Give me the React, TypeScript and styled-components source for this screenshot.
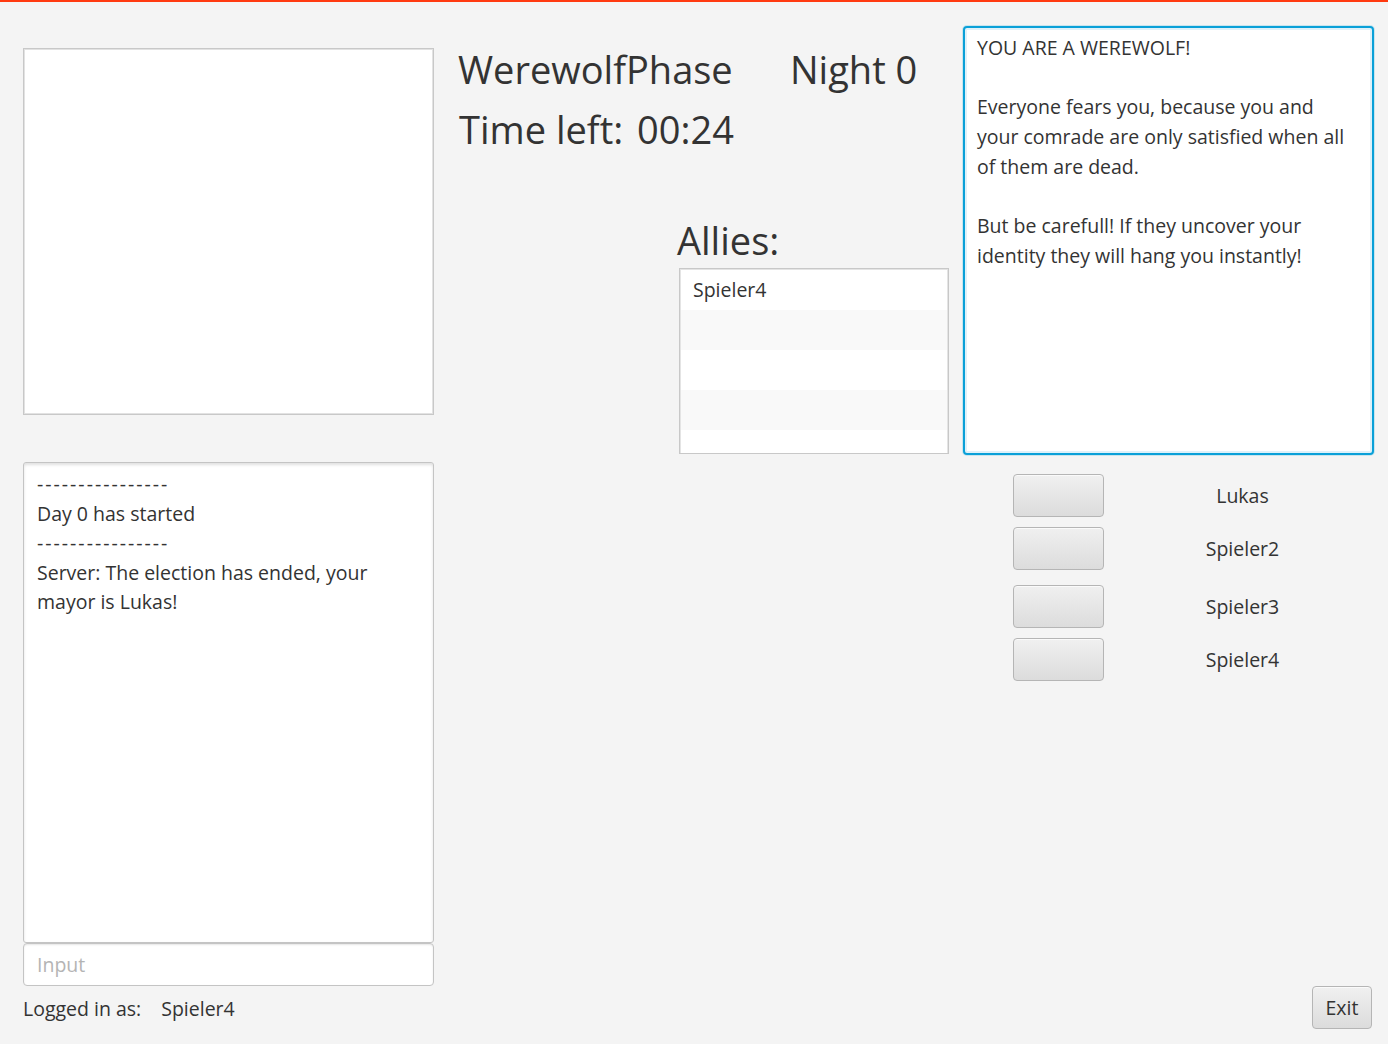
import React from "react";
import styled, { createGlobalStyle } from "styled-components";

const Global = createGlobalStyle`
  html, body { margin: 0; padding: 0; background: #f4f4f4; }
  body { font-family: "Open Sans", "Noto Sans", sans-serif; color: #333333; }
  * { box-sizing: border-box; }
`;

const Frame = styled.div`
  height: 1044px;
  border-top: 2px solid #ff3a10;
  display: flex;
  padding-left: 23px;
  background: #f4f4f4;
  overflow: hidden;
`;

const LeftColumn = styled.div`
  width: 411px;
  display: flex;
  flex-direction: column;
  padding-top: 46px;
`;

const MiddleColumn = styled.div`
  width: 490px;
  margin-left: 24px;
  display: flex;
  flex-direction: column;
`;

const RightColumn = styled.div`
  width: 411px;
  margin-left: 15px;
  display: flex;
  flex-direction: column;
  padding-top: 24px;
`;

const PlainList = styled.div`
  width: 411px;
  height: 367px;
  background: #ffffff;
  border: 1px solid #c8c8c8;
  box-shadow: inset 0 0 0 1px #e2e2e2;
`;

const ChatArea = styled.div`
  margin-top: 47px;
  height: 481px;
  background: #ffffff;
  border: 1px solid #c4c4c4;
  border-radius: 3px;
  box-shadow: inset 0 2px 3px rgba(0, 0, 0, 0.12);
  padding: 6px 13px;
  font-size: 19.5px;
  line-height: 29.5px;
`;

const ChatLine = styled.div<{ $rule?: boolean }>`
  white-space: pre-wrap;
  letter-spacing: ${(p) => (p.$rule ? "2px" : "normal")};
`;

const InputField = styled.input`
  height: 43px;
  width: 411px;
  border: 1px solid #c4c4c4;
  border-radius: 4px;
  background: #ffffff;
  box-shadow: inset 0 1px 2px rgba(0, 0, 0, 0.1);
  padding: 0 13px;
  font-family: "Open Sans", "Noto Sans", sans-serif;
  font-size: 19.5px;
  color: #333333;
  outline: none;
  &::placeholder { color: #b4b4b4; }
`;

const LoggedRow = styled.div`
  margin-top: 9px;
  display: flex;
  gap: 20px;
  font-size: 19.5px;
  line-height: 28px;
`;

const HeaderRow = styled.div`
  display: flex;
  align-items: baseline;
  font-size: 38px;
  line-height: 60px;
  margin-top: 37px;
`;

const HeaderText = styled.span<{ $width?: number }>`
  display: inline-block;
  width: ${(p) => (p.$width ? `${p.$width}px` : "auto")};
  white-space: nowrap;
`;

const TimeRow = styled(HeaderRow)`
  margin-top: 0;
  padding-left: 1px;
`;

const AlliesBlock = styled.div`
  margin-top: 54px;
  margin-left: 219px;
  display: flex;
  flex-direction: column;
`;

const AlliesTitle = styled.div`
  font-size: 38px;
  line-height: 54px;
`;

const AlliesList = styled.div`
  margin-left: 2px;
  margin-top: 1px;
  width: 270px;
  height: 186px;
  background: #ffffff;
  border: 1px solid #c8c8c8;
  box-shadow: inset 0 0 0 1px #e4e4e4;
  overflow: hidden;
  padding: 1px;
`;

const AllyRow = styled.div<{ $odd: boolean }>`
  height: 40px;
  background: ${(p) => (p.$odd ? "#f9f9f9" : "#ffffff")};
  padding-left: 12px;
  font-size: 19.5px;
  line-height: 40px;
`;

const RoleArea = styled.div`
  height: 429px;
  background: #ffffff;
  border: 2px solid #0aa0d8;
  border-radius: 4px;
  box-shadow: 0 0 0 1px rgba(3, 158, 211, 0.18), inset 0 0 0 2px #dff1f9;
  padding: 5px 12px;
  font-size: 19.5px;
  line-height: 29.7px;
`;

const RoleLine = styled.div`
  min-height: 29.7px;
`;

const VoteList = styled.div`
  margin-top: 19px;
  display: flex;
  flex-direction: column;
`;

const VoteRow = styled.div<{ $space: number }>`
  display: grid;
  grid-template-columns: 90px 1fr;
  align-items: center;
  margin-top: ${(p) => p.$space}px;
  padding-left: 50px;
`;

const VoteButton = styled.button`
  width: 91px;
  height: 43px;
  border: 1px solid #b5b5b5;
  border-radius: 4px;
  background: linear-gradient(#f0f0f0, #dcdcdc);
  box-shadow: inset 0 1px 0 #fafafa;
  cursor: pointer;
`;

const VoteName = styled.div`
  text-align: center;
  font-size: 19.5px;
  padding-left: 8px;
`;

const Spacer = styled.div`
  flex: 1;
`;

const ExitButton = styled.button`
  align-self: flex-end;
  margin-right: 2px;
  margin-bottom: 15px;
  width: 60px;
  height: 43px;
  border: 1px solid #b5b5b5;
  border-radius: 4px;
  background: linear-gradient(#f0f0f0, #dcdcdc);
  box-shadow: inset 0 1px 0 #fafafa;
  font-family: "Open Sans", "Noto Sans", sans-serif;
  font-size: 19.5px;
  color: #333333;
  padding: 0;
`;

const chat = [
  "----------------",
  "Day 0 has started",
  "----------------",
  "Server: The election has ended, your mayor is Lukas!",
];

const role = [
  "YOU ARE A WEREWOLF!",
  "",
  "Everyone fears you, because you and your comrade are only satisfied when all of them are dead.",
  "",
  "But be carefull! If they uncover your identity they will hang you instantly!",
];

const votes = [
  { name: "Lukas", space: 0 },
  { name: "Spieler2", space: 10 },
  { name: "Spieler3", space: 15 },
  { name: "Spieler4", space: 10 },
];

export default function App() {
  return (
    <>
      <Global />
      <Frame>
        <LeftColumn>
          <PlainList />
          <ChatArea>
            {chat.map((l, i) => (
              <ChatLine key={i} $rule={/^-+$/.test(l)}>
                {l}
              </ChatLine>
            ))}
          </ChatArea>
          <InputField placeholder="Input" />
          <LoggedRow>
            <span>Logged in as:</span>
            <span>Spieler4</span>
          </LoggedRow>
        </LeftColumn>
        <MiddleColumn>
          <HeaderRow>
            <HeaderText $width={332}>WerewolfPhase</HeaderText>
            <HeaderText>Night 0</HeaderText>
          </HeaderRow>
          <TimeRow>
            <HeaderText $width={178}>Time left:</HeaderText>
            <HeaderText>00:24</HeaderText>
          </TimeRow>
          <AlliesBlock>
            <AlliesTitle>Allies:</AlliesTitle>
            <AlliesList>
              {["Spieler4", "", "", "", ""].map((n, i) => (
                <AllyRow key={i} $odd={i % 2 === 1}>
                  {n}
                </AllyRow>
              ))}
            </AlliesList>
          </AlliesBlock>
        </MiddleColumn>
        <RightColumn>
          <RoleArea>
            {role.map((l, i) => (
              <RoleLine key={i}>{l}</RoleLine>
            ))}
          </RoleArea>
          <VoteList>
            {votes.map((v) => (
              <VoteRow key={v.name} $space={v.space}>
                <VoteButton />
                <VoteName>{v.name}</VoteName>
              </VoteRow>
            ))}
          </VoteList>
          <Spacer />
          <ExitButton>Exit</ExitButton>
        </RightColumn>
      </Frame>
    </>
  );
}
